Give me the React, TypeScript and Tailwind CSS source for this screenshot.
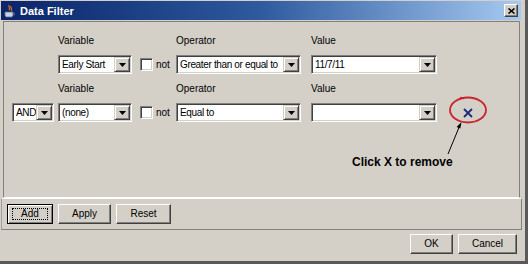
import React from 'react';

function DropArrow() {
  return (
    <div className="w-[16px] h-full shrink-0 bg-[#d4d0c8] border border-t-[#d4d0c8] border-l-[#d4d0c8] border-b-[#404040] border-r-[#404040] shadow-[inset_1px_1px_0_#ffffff,inset_-1px_-1px_0_#808080] flex items-center justify-center">
      <svg width="7" height="4" viewBox="0 0 7 4">
        <path d="M0 0h7L3.5 4z" fill="#000" />
      </svg>
    </div>
  );
}

function Combo({ w, text }: { w: string; text?: string }) {
  return (
    <div className={`${w} h-[19px] flex border border-t-[#808080] border-l-[#808080] border-b-white border-r-white`}>
      <div className="flex flex-1 min-w-0 bg-white shadow-[inset_1px_1px_0_#404040,inset_-1px_-1px_0_#d4d0c8] p-[1px]">
        <span className="flex-1 min-w-0 overflow-hidden whitespace-nowrap text-[10px] leading-[15px] tracking-[-0.35px] pl-[2px]">{text}</span>
        <DropArrow />
      </div>
    </div>
  );
}

function Check() {
  return (
    <div className="flex items-center gap-[3px] h-[19px]">
      <div className="w-[13px] h-[13px] bg-white border border-t-[#808080] border-l-[#808080] border-b-white border-r-white shadow-[inset_1px_1px_0_#404040,inset_-1px_-1px_0_#d4d0c8]" />
      <span className="text-[10px] leading-[12px]">not</span>
    </div>
  );
}

function Btn({ w, label, focused }: { w: string; label: string; focused?: boolean }) {
  return (
    <div
      className={`${w} h-[20px] flex items-center justify-center bg-[#d4d0c8] border ${
        focused
          ? 'border-black shadow-[inset_1px_1px_0_#ffffff,inset_-1px_-1px_0_#808080]'
          : 'border-t-white border-l-white border-b-[#404040] border-r-[#404040] shadow-[inset_-1px_-1px_0_#808080]'
      }`}
    >
      {focused ? (
        <div className="w-[calc(100%-8px)] h-[12px] border border-dotted border-black flex items-center justify-center text-[10px] leading-[10px]">
          {label}
        </div>
      ) : (
        <span className="text-[10px] leading-[10px]">{label}</span>
      )}
    </div>
  );
}

function FilterRow({ first }: { first?: boolean }) {
  return (
    <div className="flex">
      <div className="w-[46px] flex flex-col">
        <div className="h-[12px] mb-[8px]" />
        {!first && <Combo w="w-[42px]" text="AND" />}
      </div>
      <div className="w-[82px] flex flex-col">
        <div className="h-[12px] mb-[8px] text-[10px] leading-[12px]">Variable</div>
        <Combo w="w-[74px]" text={first ? 'Early Start' : '(none)'} />
      </div>
      <div className="w-[36px] flex flex-col">
        <div className="h-[12px] mb-[8px]" />
        <Check />
      </div>
      <div className="w-[135px] flex flex-col">
        <div className="h-[12px] mb-[8px] text-[10px] leading-[12px]">Operator</div>
        <Combo w="w-[125px]" text={first ? 'Greater than or equal to' : 'Equal to'} />
      </div>
      <div className="w-[126px] flex flex-col">
        <div className="h-[12px] mb-[8px] text-[10px] leading-[12px]">Value</div>
        <Combo w="w-[126px]" text={first ? '11/7/11' : ''} />
      </div>
      {!first && (
        <div className="flex flex-col ml-[26px]">
          <div className="h-[12px] mb-[8px]" />
          <div className="h-[19px] flex items-center">
            <svg width="10" height="10" viewBox="0 0 10 10">
              <path d="M1 1l8 8M9 1l-8 8" stroke="#1c2a7a" strokeWidth="1.8" />
            </svg>
          </div>
        </div>
      )}
    </div>
  );
}

function JavaIcon() {
  return (
    <svg width="12" height="14" viewBox="0 0 12 14">
      <path d="M5 1c-1 2 2 3 0 5M7 2c-1 2 2 3 0 5" stroke="#e07020" strokeWidth="1.2" fill="none" />
      <path d="M1 8h8v3c0 1.5-1 2-2 2H3c-1 0-2-.5-2-2z" fill="#c8d4e4" stroke="#5a6a8a" strokeWidth="0.8" />
      <path d="M9 9h1.5v2H9" stroke="#5a6a8a" strokeWidth="0.8" fill="none" />
    </svg>
  );
}

export default function App() {
  return (
    <div className="relative w-[528px] h-[264px] bg-[#d4d0c8] font-['Liberation_Sans',Arial,sans-serif] text-black overflow-hidden border-r-[3px] border-r-[#5a5a5a] border-b-[3px] border-b-[#5a5a5a]">
      <div className="ml-[1px] mt-[1px] mr-[4px] h-[19px] flex items-center bg-linear-to-r from-[#0a246a] via-[#2f5a9e] to-[#a6caf0] pl-[3px] pr-[3px]">
        <JavaIcon />
        <span className="ml-[4px] text-[11px] leading-[12px] font-bold text-white">Data Filter</span>
        <div className="ml-auto w-[14px] h-[13px] bg-[#d4d0c8] border border-t-white border-l-white border-b-[#404040] border-r-[#404040] shadow-[inset_-1px_-1px_0_#808080] flex items-center justify-center">
          <svg width="7" height="6" viewBox="0 0 7 6">
            <path d="M0.5 0.5l6 5M6.5 0.5l-6 5" stroke="#000" strokeWidth="1.6" />
          </svg>
        </div>
      </div>

      <div className="mt-[1px] ml-[3px] w-[517px] h-[177px] border border-t-[#808080] border-l-[#808080] border-r-[#808080] border-b-white pl-[8px] pt-[13px]">
        <FilterRow first />
        <div className="mt-[9px]">
          <FilterRow />
        </div>
      </div>

      <div className="ml-[1px] w-[521px] h-[32px] border border-t-white border-l-[#a0a0a0] border-b-[#808080] border-r-[#808080] pl-[5px] pt-[5px] flex gap-[5px]">
        <Btn w="w-[46px]" label="Add" focused />
        <Btn w="w-[53px]" label="Apply" />
        <Btn w="w-[55px]" label="Reset" />
      </div>

      <div className="flex justify-end gap-[5px] pt-[4px] pr-[8px]">
        <Btn w="w-[43px]" label="OK" />
        <Btn w="w-[59px]" label="Cancel" />
      </div>

      <svg className="absolute left-0 top-0 pointer-events-none" width="528" height="264" viewBox="0 0 528 264">
        <ellipse cx="468" cy="110" rx="18" ry="12.5" fill="none" stroke="#c8252c" strokeWidth="1.8" />
        <path d="M460 97.5l4 1" stroke="#c8252c" strokeWidth="1.5" />
        <path d="M448 154L460 125" stroke="#000" strokeWidth="1" />
        <path d="M461.5 122l-1.2 6.5-3.7-1.6z" fill="#000" />
      </svg>
      <div className="absolute left-[352px] top-[155px] text-[12px] leading-[14px] font-bold whitespace-nowrap">Click X to remove</div>
    </div>
  );
}
